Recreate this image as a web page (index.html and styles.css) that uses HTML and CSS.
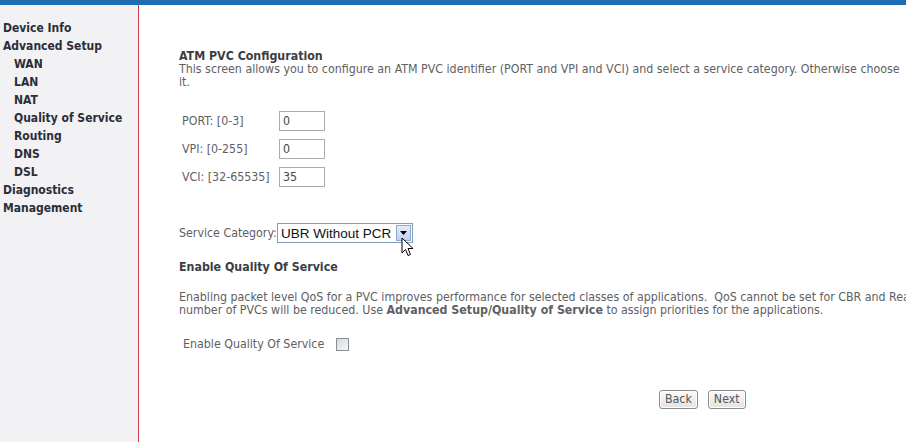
FILE: index.html
```html
<!DOCTYPE html>
<html>
<head>
<meta charset="utf-8">
<link rel="stylesheet" href="styles.css">
</head>
<body>
<div class="topbar"></div>
<div class="layout">
  <nav class="sidebar">
    <div class="nav-item">Device Info</div>
    <div class="nav-item">Advanced Setup</div>
    <div class="nav-item sub">WAN</div>
    <div class="nav-item sub">LAN</div>
    <div class="nav-item sub">NAT</div>
    <div class="nav-item sub">Quality of Service</div>
    <div class="nav-item sub">Routing</div>
    <div class="nav-item sub">DNS</div>
    <div class="nav-item sub">DSL</div>
    <div class="nav-item">Diagnostics</div>
    <div class="nav-item">Management</div>
  </nav>
  <main class="content">
    <div class="title">ATM PVC Configuration</div>
    <div class="desc">This screen allows you to configure an ATM PVC identifier (PORT and VPI and VCI) and select a service category. Otherwise choose<br>it.</div>

    <div class="fields">
      <div class="field"><span class="flabel">PORT: [0-3]</span><input class="tin" type="text" value="0"></div>
      <div class="field"><span class="flabel">VPI: [0-255]</span><input class="tin" type="text" value="0"></div>
      <div class="field"><span class="flabel">VCI: [32-65535]</span><input class="tin" type="text" value="35"></div>
    </div>

    <div class="svc">
      <span class="svc-label">Service Category:</span>
      <span class="selectbox">
        <span class="select-text">UBR Without PCR</span>
        <span class="select-btn"><svg width="7" height="4" viewBox="0 0 7 4"><path d="M0 0H7L3.5 4Z" fill="#000"/></svg></span>
        <svg class="cursor" width="14" height="20" viewBox="0 0 14 20"><path d="M1 1V16L4.5 12.5L7 18.5L9.5 17.5L7 11.5H12Z" fill="#fff" stroke="#000" stroke-width="1" stroke-linejoin="round"/></svg>
      </span>
    </div>

    <div class="subtitle">Enable Quality Of Service</div>
    <div class="para">Enabling packet level QoS for a PVC improves performance for selected classes of applications.&nbsp; QoS cannot be set for CBR and Realtime VBR categories.<br>number of PVCs will be reduced. Use <b>Advanced Setup/Quality of Service</b> to assign priorities for the applications.</div>

    <div class="qos-row"><span>Enable Quality Of Service</span><input class="chk" type="checkbox"></div>

    <div class="buttons">
      <button class="btn">Back</button>
      <button class="btn">Next</button>
    </div>
  </main>
</div>
</body>
</html>
```
FILE: styles.css
```css
html, body {
  margin: 0;
  padding: 0;
  width: 906px;
  height: 442px;
  overflow: hidden;
  background: #fff;
}
body {
  font-family: "DejaVu Sans Condensed", "DejaVu Sans", sans-serif;
  font-size: 12.3px;
  color: #5e6064;
}
.topbar {
  height: 5px;
  background: #1d6db2;
}
.layout {
  display: flex;
  height: 437px;
}
.sidebar {
  width: 139px;
  flex: none;
  background: #f2f2f4;
  border-right: 1px solid #c83a46;
  padding-top: 14px;
  box-sizing: border-box;
}
.nav-item {
  font-weight: bold;
  font-size: 12px;
  line-height: 18px;
  color: #2b2d38;
  padding-left: 3px;
  white-space: nowrap;
}
.nav-item.sub {
  padding-left: 14px;
}
.content {
  flex: 1;
  min-width: 0;
  overflow: hidden;
  padding: 45px 0 0 40px;
  white-space: nowrap;
  line-height: 13px;
}
.title {
  font-weight: bold;
  color: #3b3d42;
}
.desc {
  margin-bottom: 22px;
}
.fields {
  display: flex;
  flex-direction: column;
  gap: 8px;
  padding-left: 3px;
}
.field {
  display: flex;
  align-items: center;
  height: 20px;
}
.flabel {
  width: 97px;
}
.tin {
  width: 46px;
  height: 20px;
  box-sizing: border-box;
  border: 1px solid #a9adb3;
  padding: 0 3px;
  margin: 0;
  font: inherit;
  color: #444;
  background: #fff;
  outline: none;
}
.svc {
  display: flex;
  align-items: center;
  margin-top: 36px;
  height: 20px;
}
.svc-label {
  width: 98px;
}
.selectbox {
  position: relative;
  display: inline-flex;
  align-items: center;
  width: 136px;
  height: 20px;
  box-sizing: border-box;
  border: 1px solid #7f9db9;
  background: #fff;
}
.select-text {
  flex: 1;
  font-family: "Liberation Sans", Arial, sans-serif;
  font-size: 13.5px;
  color: #111;
  padding-left: 3px;
}
.select-btn {
  width: 15px;
  height: 16px;
  margin-right: 1px;
  box-sizing: border-box;
  border: 1px solid #8ea8cc;
  background: linear-gradient(#e4eefb, #bcd1f0);
  display: flex;
  align-items: center;
  justify-content: center;
}
.cursor {
  position: absolute;
  left: 123px;
  top: 13px;
}
.subtitle {
  font-weight: bold;
  color: #3b3d42;
  margin-top: 18px;
}
.para {
  margin-top: 17px;
}
.qos-row {
  display: flex;
  align-items: center;
  gap: 12px;
  margin-top: 21px;
  padding-left: 4px;
}
.chk {
  appearance: none;
  -webkit-appearance: none;
  width: 13px;
  height: 13px;
  margin: 0;
  border: 1px solid #8a8d93;
  background: linear-gradient(135deg, #d6d8dc, #f7f7f8);
  box-sizing: border-box;
}
.buttons {
  display: flex;
  gap: 10px;
  margin-top: 39px;
  padding-left: 480px;
}
.btn {
  font: inherit;
  color: #555;
  height: 19px;
  padding: 0 5px;
  border: 1px solid #8c8c8c;
  border-radius: 3px;
  background: linear-gradient(#fafafa, #e2e2e2);
  box-shadow: inset 0 0 0 1px #fff;
}
```
